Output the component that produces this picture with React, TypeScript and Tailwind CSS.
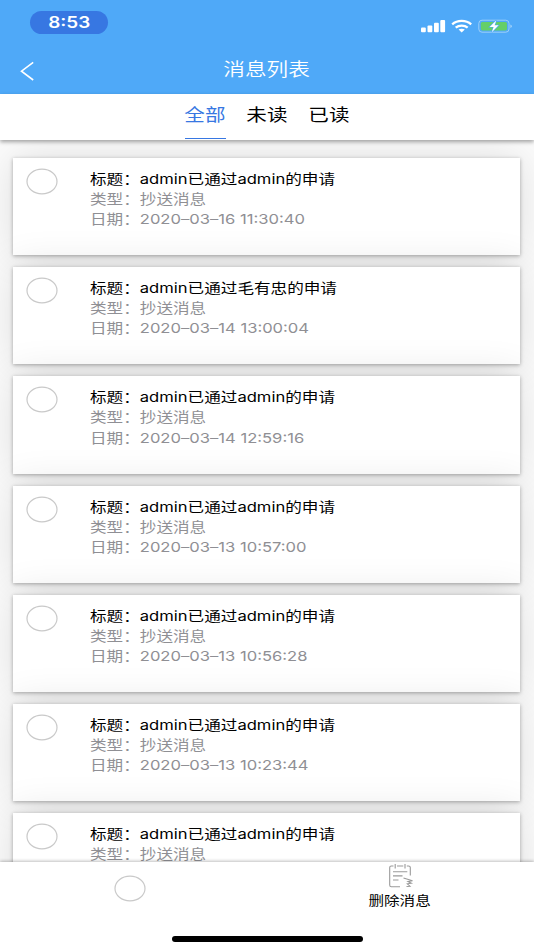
import { useState } from "react";
import clsx from "clsx";

interface Message {
  id: number;
  title: string;
  type: string;
  date?: string;
}

const tabs = ["全部", "未读", "已读"];

const messages: Message[] = [
  { id: 1, title: "admin已通过admin的申请", type: "抄送消息", date: "2020–03–16 11:30:40" },
  { id: 2, title: "admin已通过毛有忠的申请", type: "抄送消息", date: "2020–03–14 13:00:04" },
  { id: 3, title: "admin已通过admin的申请", type: "抄送消息", date: "2020–03–14 12:59:16" },
  { id: 4, title: "admin已通过admin的申请", type: "抄送消息", date: "2020–03–13 10:57:00" },
  { id: 5, title: "admin已通过admin的申请", type: "抄送消息", date: "2020–03–13 10:56:28" },
  { id: 6, title: "admin已通过admin的申请", type: "抄送消息", date: "2020–03–13 10:23:44" },
  { id: 7, title: "admin已通过admin的申请", type: "抄送消息" },
];

const StatusBar = () => (
  <div className="flex h-[46px] items-start justify-between pt-[11px] pr-[21px] pl-[30px]">
    <div className="flex h-[23px] w-[78px] items-center justify-center rounded-full bg-[#3777e2] pt-[1px]">
      <span className="scale-x-[1.22] text-[15.5px] font-semibold text-white">8:53</span>
    </div>
    <svg width="92" height="16" viewBox="0 0 92 16" className="mt-[7px]">
      <g fill="#fff">
        <rect x="0" y="9.6" width="4.8" height="4.6" rx="1" />
        <rect x="6.5" y="7.4" width="4.8" height="6.8" rx="1" />
        <rect x="13" y="4.7" width="4.8" height="9.5" rx="1" />
        <rect x="19.3" y="2" width="4.8" height="12.2" rx="1" />
      </g>
      <g fill="none" stroke="#fff" strokeWidth="2.3">
        <path d="M31.2 6.4C36.4 1.8 45 1.8 50.2 6.4" />
        <path d="M34.7 9.7C38 6.9 43.4 6.9 46.7 9.7" />
      </g>
      <path d="M37.6 11.6C39.2 10.3 42.2 10.3 43.8 11.6L40.7 14.4Z" fill="#fff" />
      <rect x="57.8" y="2.2" width="30.2" height="12" rx="3.2" fill="none" stroke="#9ccff9" strokeWidth="1" />
      <rect x="59.8" y="4" width="26.2" height="8.4" rx="1.6" fill="#65cf68" />
      <path d="M89.3 6.4Q91 7 91 8.2Q91 9.5 89.3 10Z" fill="#9ccff9" />
      <path
        d="M75.4 2.2L68.6 9H72.6L70.8 14.2L77.6 7.3H73.6Z"
        fill="#fff"
        stroke="#4fa9f8"
        strokeWidth="1.2"
        paintOrder="stroke"
      />
    </svg>
  </div>
);

const Header = () => (
  <header className="h-[93.5px] shrink-0 bg-[#4fa9f8]">
    <StatusBar />
    <div className="grid h-[49px] grid-cols-[1fr_auto_1fr] items-center">
      <button type="button" aria-label="返回" className="pl-[20px]">
        <svg width="15" height="20" viewBox="0 0 15 20" fill="none" stroke="#fff" strokeWidth="1.6">
          <path d="M13.2 1.3L1.5 10.2L13.2 19" />
        </svg>
      </button>
      <h1 className="scale-x-[1.217] text-[17.8px] font-[350] text-white">消息列表</h1>
    </div>
  </header>
);

const CheckCircle = () => (
  <svg width="32" height="27" viewBox="0 0 32 27" className="block shrink-0">
    <ellipse cx="16" cy="13.5" rx="15" ry="12.3" fill="#fff" stroke="#c9c9c9" strokeWidth="1.2" />
  </svg>
);

const MessageCard = ({ message }: { message: Message }) => (
  <article className="flex h-[97.2px] shrink-0 bg-white pt-[10px] pl-[13px] shadow-[0_1px_4px_rgba(0,0,0,0.32),0_0_40px_rgba(0,0,0,0.12)]">
    <CheckCircle />
    <div className="ml-[32px] origin-left scale-x-[1.212] pt-[1px] text-[13.7px] leading-[20.1px] whitespace-nowrap text-[#8f8f94]">
      <p className="text-black">标题：{message.title}</p>
      <p>类型：{message.type}</p>
      {message.date ? <p>日期：{message.date}</p> : null}
    </div>
  </article>
);

const Footer = () => (
  <footer className="z-10 flex h-[88.5px] shrink-0 flex-col bg-white shadow-[0_-1px_3px_rgba(0,0,0,0.25)]">
    <div className="grid h-[73px] grid-cols-2">
      <button type="button" aria-label="全选" className="flex justify-center pt-[13px] pr-[7px]">
        <CheckCircle />
      </button>
      <button type="button" className="flex flex-col items-center pt-[1px]">
        <svg width="26" height="25" viewBox="0 0 26 25" className="ml-[1px]" fill="none" stroke="#9a9a9a" strokeWidth="1.1">
          <path d="M5.5 3H3.3Q1.7 3 1.7 4.6V22Q1.7 23.8 3.3 23.8H12M9 3H15.3M18.8 3H20.5Q22.3 3 22.3 4.6V12.5" />
          <path d="M7.2 1V5.4M17 1V5.4M5 8.7H19.3M5 12.9H14.5M5 17H10.5" />
          <path d="M15.5 15L24.5 17.7L20 18.5L23.3 20.2L19.3 20.8L22 23.2L18.5 23.5" />
        </svg>
        <span className="mt-[1px] mr-[1px] scale-x-[1.217] text-[12.8px] leading-[24px] text-black">删除消息</span>
      </button>
    </div>
    <div className="mx-auto mt-[1px] h-[6px] w-[191px] rounded-full bg-black" />
  </footer>
);

export default function App() {
  const [activeTab, setActiveTab] = useState(0);

  return (
    <div className="flex h-[950px] w-[534px] flex-col overflow-hidden bg-[#fbfbfb] font-[Inter,'Noto_Sans_CJK_SC',sans-serif]">
      <Header />
      <nav className="z-10 flex h-[46.5px] shrink-0 justify-center gap-[21px] bg-white shadow-[0_2px_4px_rgba(0,0,0,0.35)]">
        {tabs.map((tab, index) => (
          <button
            key={tab}
            type="button"
            onClick={() => setActiveTab(index)}
            className={clsx(
              "flex h-[45px] w-[41px] justify-center border-b pt-[9px] text-[16.9px] leading-[24px]",
              index === activeTab ? "border-[#3777e2] text-[#3777e2]" : "border-transparent text-black"
            )}
          >
            <span className="shrink-0 scale-x-[1.217]">{tab}</span>
          </button>
        ))}
      </nav>
      <main className="flex min-h-0 flex-1 flex-col gap-[12px] overflow-hidden pt-[18px] pr-[14px] pl-[13px]">
        {messages.map((message) => (
          <MessageCard key={message.id} message={message} />
        ))}
      </main>
      <Footer />
    </div>
  );
}
